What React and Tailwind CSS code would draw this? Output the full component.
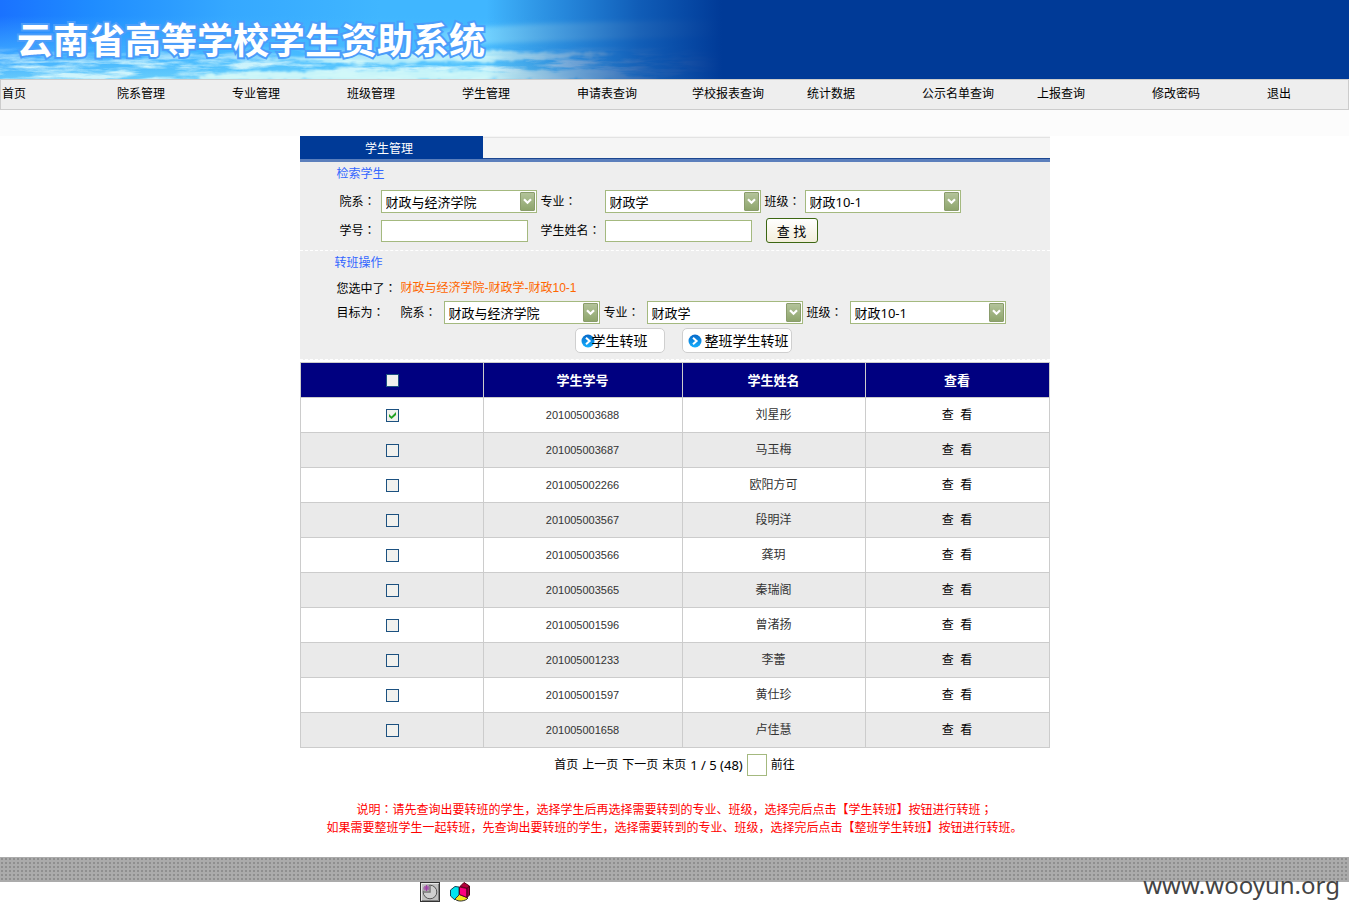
import React from "react";

const NAV = [
  "首页", "院系管理", "专业管理", "班级管理", "学生管理", "申请表查询",
  "学校报表查询", "统计数据", "公示名单查询", "上报查询", "修改密码", "退出",
];

const STUDENTS = [
  ["201005003688", "刘星彤"],
  ["201005003687", "马玉梅"],
  ["201005002266", "欧阳方可"],
  ["201005003567", "段明洋"],
  ["201005003566", "龚玥"],
  ["201005003565", "秦瑞阁"],
  ["201005001596", "曾渚扬"],
  ["201005001233", "李蕾"],
  ["201005001597", "黄仕珍"],
  ["201005001658", "卢佳慧"],
];

// The JP face centres full-width colons and semicolons in their cell.
function Mark({ children }) {
  return <span className="font-['Noto_Sans_CJK_JP',sans-serif]">{children}</span>;
}

function Sky() {
  return (
    <svg className="absolute inset-y-0 left-0 h-full w-[760px]" viewBox="0 0 760 79" preserveAspectRatio="none" aria-hidden="true">
      <defs>
        <linearGradient id="sky" x1="0" y1="0" x2="1" y2="0">
          <stop offset="0" stopColor="#1a72ff" />
          <stop offset="0.12" stopColor="#1f8cff" />
          <stop offset="0.3" stopColor="#35a8ff" />
          <stop offset="0.5" stopColor="#40b6ff" />
          <stop offset="1" stopColor="#40b6ff" />
        </linearGradient>
        <linearGradient id="glow" x1="0" y1="0" x2="0" y2="1">
          <stop offset="0.2" stopColor="#4cc0ff" stopOpacity="0" />
          <stop offset="0.7" stopColor="#4cc0ff" stopOpacity="0.7" />
          <stop offset="1" stopColor="#6fd4fb" stopOpacity="0.9" />
        </linearGradient>
        <linearGradient id="fade" x1="0" y1="0" x2="1" y2="0">
          <stop offset="0.64" stopColor="#003a97" stopOpacity="0" />
          <stop offset="0.74" stopColor="#0044a8" stopOpacity="0.4" />
          <stop offset="0.84" stopColor="#003f9f" stopOpacity="0.75" />
          <stop offset="0.95" stopColor="#003a97" />
        </linearGradient>
        <linearGradient id="low" x1="0" y1="0" x2="0" y2="1">
          <stop offset="0.58" stopColor="#000" />
          <stop offset="0.78" stopColor="#ddd" />
        </linearGradient>
        <mask id="lowMask"><rect width="760" height="79" fill="url(#low)" /></mask>
        <filter id="cloud" x="0" y="0" width="100%" height="100%">
          <feTurbulence type="fractalNoise" baseFrequency="0.022 0.15" numOctaves="5" seed="8" />
          <feColorMatrix values="0 0 0 0 0.74  0 0 0 0 0.96  0 0 0 0 0.97  3 0 0 0 -1.15" />
        </filter>
        <filter id="soft" x="-10%" y="-50%" width="120%" height="200%"><feGaussianBlur stdDeviation="5 2" /></filter>
        <filter id="edge" x="-5%" y="-20%" width="110%" height="140%">
          <feTurbulence type="fractalNoise" baseFrequency="0.06 0.2" numOctaves="3" seed="3" result="n" />
          <feDisplacementMap in="SourceGraphic" in2="n" scale="9" />
          <feGaussianBlur stdDeviation="0.8" />
        </filter>
      </defs>
      <rect width="760" height="79" fill="url(#sky)" />
      <rect width="760" height="79" fill="url(#glow)" />
      <path d="M440 30C500 25 590 21 720 20L720 36C600 40 520 42 440 46Z" fill="#8fe2ff" opacity="0.6" filter="url(#soft)" />
      <g mask="url(#lowMask)"><rect width="760" height="79" filter="url(#cloud)" /></g>
      <g filter="url(#edge)" fill="#d2f8f8">
        <path d="M260 60C320 52 400 56 470 50C500 48 530 54 620 53C580 58 500 62 420 62C360 66 300 60 260 60Z" opacity="0.75" />
        <path d="M200 76C300 68 420 70 540 71C590 68 630 74 660 80H200Z" opacity="0.9" />
      </g>
      <rect width="760" height="79" fill="url(#fade)" />
    </svg>
  );
}

function Select({ id, label, value }) {
  return (
    <span className="relative block h-[23px] w-[156px] shrink-0">
      <select
        id={id}
        aria-label={label}
        defaultValue={value}
        className="block h-full w-full appearance-none rounded-none border border-[#a4b97f] bg-white pl-1 pr-5 text-[13px] leading-5 text-black"
      >
        <option>{value}</option>
      </select>
      <span className="pointer-events-none absolute right-[2px] top-[2px] flex h-[19px] w-[15px] items-center justify-center rounded-[1px] border border-[#8a9c6c] bg-linear-to-b from-[#b3c39a] to-[#8ea56c]">
        <svg width="9" height="7" viewBox="0 0 9 7" fill="none" aria-hidden="true">
          <path d="M1 1.2 4.5 4.7 8 1.2" stroke="#fff" strokeWidth="2.2" />
        </svg>
      </span>
    </span>
  );
}

function TextBox({ id }) {
  return <input id={id} type="text" className="block h-[22px] w-[147px] border border-[#a4b97f] bg-white px-1 text-[13px]" />;
}

function ArrowDot() {
  return (
    <svg className="shrink-0" width="14" height="14" viewBox="0 0 14 14" aria-hidden="true">
      <defs>
        <linearGradient id="dot" x1="0" y1="0" x2="0" y2="1">
          <stop offset="0" stopColor="#0668c8" />
          <stop offset="1" stopColor="#16b0ff" />
        </linearGradient>
      </defs>
      <circle cx="7" cy="7" r="6.5" fill="url(#dot)" />
      <path d="M5 3.8 8.6 7 5 10.2" fill="none" stroke="#fff" strokeWidth="2" />
    </svg>
  );
}

function CheckCell({ label, checked }) {
  return (
    <span className="relative mx-auto block size-[13px]">
      <input
        type="checkbox"
        aria-label={label}
        defaultChecked={checked}
        className="peer block size-[13px] appearance-none border border-[#1c5180] bg-[#f1f1ee]"
      />
      <svg className="pointer-events-none absolute left-[3px] top-[3px] hidden peer-checked:block" width="7" height="7" viewBox="0 0 7 7" aria-hidden="true">
        <path d="M0 2 2.5 4.5 7 0V3L2.5 7 0 4.8Z" fill="#21a121" />
      </svg>
    </span>
  );
}

export default function App() {
  const actionButton = "flex h-[25px] items-center rounded-[5px] border border-[#cfcfcf] bg-white pl-[5px] text-[14px] leading-5 text-black";
  const cell = "border border-[#ccc] p-0 text-center";
  const checkCell = "border border-[#ccc] p-0 pl-[2px] text-center";
  return (
    <div className="min-h-screen bg-white font-['Noto_Sans','Noto_Sans_CJK_SC',sans-serif] text-[12px] leading-[18px] text-black">
      <header className="relative h-[79px] overflow-hidden bg-[#003a97]">
        <Sky />
        <h1 className="relative pl-[17px] pt-[13px] font-['Noto_Sans_CJK_SC',sans-serif] text-[36px] font-bold leading-[50px] whitespace-nowrap text-white [paint-order:stroke_fill] [-webkit-text-stroke:4px_#4b9dfa]">
          云南省高等学校学生资助系统
        </h1>
      </header>

      <nav className="grid h-[31px] grid-cols-[repeat(11,minmax(0,1fr))_82px] border border-[#ccc] bg-[#eee] pt-[5px]">
        {NAV.map((item) => (
          <a key={item} href="#" className="pl-px whitespace-nowrap">{item}</a>
        ))}
      </nav>
      <div className="h-[26px] bg-[#fcfcfc]" />

      <main className="mx-auto w-full max-w-[750px]">
        <div className="flex h-[23px] border-b border-[#1c4791] bg-[#f5f5f5]">
          <div className="h-[23px] w-[183px] bg-[#003a97] pt-1 pr-1 text-center text-white">学生管理</div>
          <div className="mt-px flex-1 border-t border-[#e3e3e3]" />
        </div>
        <div className="h-[3px] bg-[#5b7fbc]" />

        <section className="h-[89px] border-b border-dashed border-white bg-[#eee] pt-[3px]">
          <h2 className="pl-[37px] text-[#36f]">检索学生</h2>
          <div className="mt-[7px] grid grid-cols-[41px_160px_64px_160px_40px_156px] items-center gap-y-[5px] pl-10 whitespace-nowrap">
            <label htmlFor="dept">院系<Mark>：</Mark></label>
            <Select id="dept" value="财政与经济学院" />
            <label htmlFor="major">专业<Mark>：</Mark></label>
            <Select id="major" value="财政学" />
            <label htmlFor="klass">班级<Mark>：</Mark></label>
            <Select id="klass" value="财政10-1" />
            <label htmlFor="sid">学号<Mark>：</Mark></label>
            <TextBox id="sid" />
            <label htmlFor="sname">学生姓名<Mark>：</Mark></label>
            <TextBox id="sname" />
            <button type="button" className="ml-px h-[25px] w-[52px] rounded-[3px] border border-[#3c6612] bg-linear-to-b from-white to-[#f3eedb] text-[13px] leading-5">查 找</button>
          </div>
        </section>

        <section className="h-[109px] border-b border-dashed border-white bg-[#eee] pt-[3px]">
          <h2 className="pl-[35px] text-[#36f]">转班操作</h2>
          <div className="mt-[7px] flex pl-[37px]">
            <span className="w-16">您选中了<Mark>：</Mark></span>
            <span className="font-['Liberation_Sans','Noto_Sans_CJK_SC',sans-serif] text-[#f60]">财政与经济学院-财政学-财政10-1</span>
          </div>
          <div className="mt-[3px] flex items-center pl-[37px] whitespace-nowrap">
            <span className="w-16 shrink-0">目标为<Mark>：</Mark></span>
            <label htmlFor="tdept" className="w-[43px] shrink-0">院系<Mark>：</Mark></label>
            <Select id="tdept" value="财政与经济学院" />
            <label htmlFor="tmajor" className="w-[47px] shrink-0 pl-1">专业<Mark>：</Mark></label>
            <Select id="tmajor" value="财政学" />
            <label htmlFor="tklass" className="w-[47px] shrink-0 pl-1">班级<Mark>：</Mark></label>
            <Select id="tklass" value="财政10-1" />
          </div>
          <div className="mt-1 flex justify-center gap-[17px] pl-[17px]">
            <button type="button" className={actionButton + " w-[90px]"}>
              <ArrowDot /><span className="-ml-[3px]">学生转班</span>
            </button>
            <button type="button" className={actionButton + " w-[110px] gap-[3px]"}>
              <ArrowDot /><span>整班学生转班</span>
            </button>
          </div>
        </section>

        <table className="mt-[2px] w-full table-fixed border-collapse">
          <colgroup>
            <col className="w-[183px]" />
            <col className="w-[199px]" />
            <col className="w-[183px]" />
            <col />
          </colgroup>
          <thead>
            <tr className="h-[35px] bg-[#000080] text-[13px] font-bold text-white">
              <th className={checkCell}><CheckCell label="全选" /></th>
              <th className={cell}>学生学号</th>
              <th className={cell}>学生姓名</th>
              <th className={cell}>查看</th>
            </tr>
          </thead>
          <tbody>
            {STUDENTS.map(([id, name], i) => (
              <tr key={id} className="h-[35px] odd:bg-white even:bg-[#eaeaea]">
                <td className={checkCell}><CheckCell label={name} checked={i === 0} /></td>
                <td className={cell + " font-['Liberation_Sans',sans-serif] text-[11px] text-[#333]"}>{id}</td>
                <td className={cell + " text-[#333]"}>{name}</td>
                <td className={cell}><a href="#">查{"\u00a0\u00a0"}看</a></td>
              </tr>
            ))}
          </tbody>
        </table>

        <div className="mt-[6px] flex items-center justify-center gap-1 whitespace-nowrap">
          <a href="#">首页</a>
          <a href="#">上一页</a>
          <a href="#">下一页</a>
          <a href="#">末页</a>
          <span className="text-[13px]">1 / 5 (48)</span>
          <input type="text" aria-label="页码" className="h-[22px] w-5 border border-[#a4b97f] bg-white" />
          <a href="#">前往</a>
        </div>

        <div className="mt-6 text-center font-['Noto_Sans_CJK_SC',sans-serif] text-[#f00]">
          <p>说明<Mark>：</Mark>请先查询出要转班的学生，选择学生后再选择需要转到的专业、班级，选择完后点击【学生转班】按钮进行转班<Mark>；</Mark></p>
          <p>如果需要整班学生一起转班，先查询出要转班的学生，选择需要转到的专业、班级，选择完后点击【整班学生转班】按钮进行转班。</p>
        </div>
      </main>

      <footer className="relative mt-[21px]">
        <div className="h-[25px] bg-[#ababab] bg-[radial-gradient(circle,#8f8f8f_1px,transparent_1px)] bg-size-[4px_4px]" />
        <div className="mx-auto flex max-w-[510px] gap-[10px]">
          <svg width="20" height="20" viewBox="0 0 20 20" aria-hidden="true">
            <rect x="0.5" y="0.5" width="19" height="19" fill="#c0c0c0" stroke="#333" />
            <path d="M1.5 18.5V1.5H18.5" fill="none" stroke="#e8e8e8" />
            <path d="M18.5 2V18.5H2" fill="none" stroke="#808080" />
            <circle cx="10" cy="10" r="6.8" fill="#cfcfcf" stroke="#555" />
            <path d="M10 3V10H3" fill="none" stroke="#777" strokeWidth="1.5" />
            <path d="M9 2.5V9H2.5C2.5 5 5 2.5 9 2.5Z" fill="#aaa0aa" />
            <path d="M6.5 3V9M3.5 6H9.5M4.5 4 8.5 8M8.5 4 4.5 8" stroke="#a03ca8" />
          </svg>
          <svg width="20" height="20" viewBox="0 0 20 20" aria-hidden="true">
            <path d="M0.5 8 5 4.5 9 5V13L5 18 0.5 14Z" fill="#00e5ee" stroke="#145" />
            <path d="M5 17 9.5 12.5 18 16C16 19 8 20.5 5 17Z" fill="#f4e81a" stroke="#333" />
            <path d="M10 4.5 14 0.5 19.5 4 18 6.5Z" fill="#b4003c" stroke="#501" />
            <path d="M9.5 5 17 6.5V15.5L9.5 12.5Z" fill="#ff0080" stroke="#602" />
            <path d="M17 6.5 19.5 4V13L17 15.5Z" fill="#a00046" stroke="#401" />
          </svg>
        </div>
        <div className="absolute right-[9px] top-3 font-['Noto_Sans',sans-serif] text-[24px] leading-8 text-[#444]">www.wooyun.org</div>
      </footer>
    </div>
  );
}
